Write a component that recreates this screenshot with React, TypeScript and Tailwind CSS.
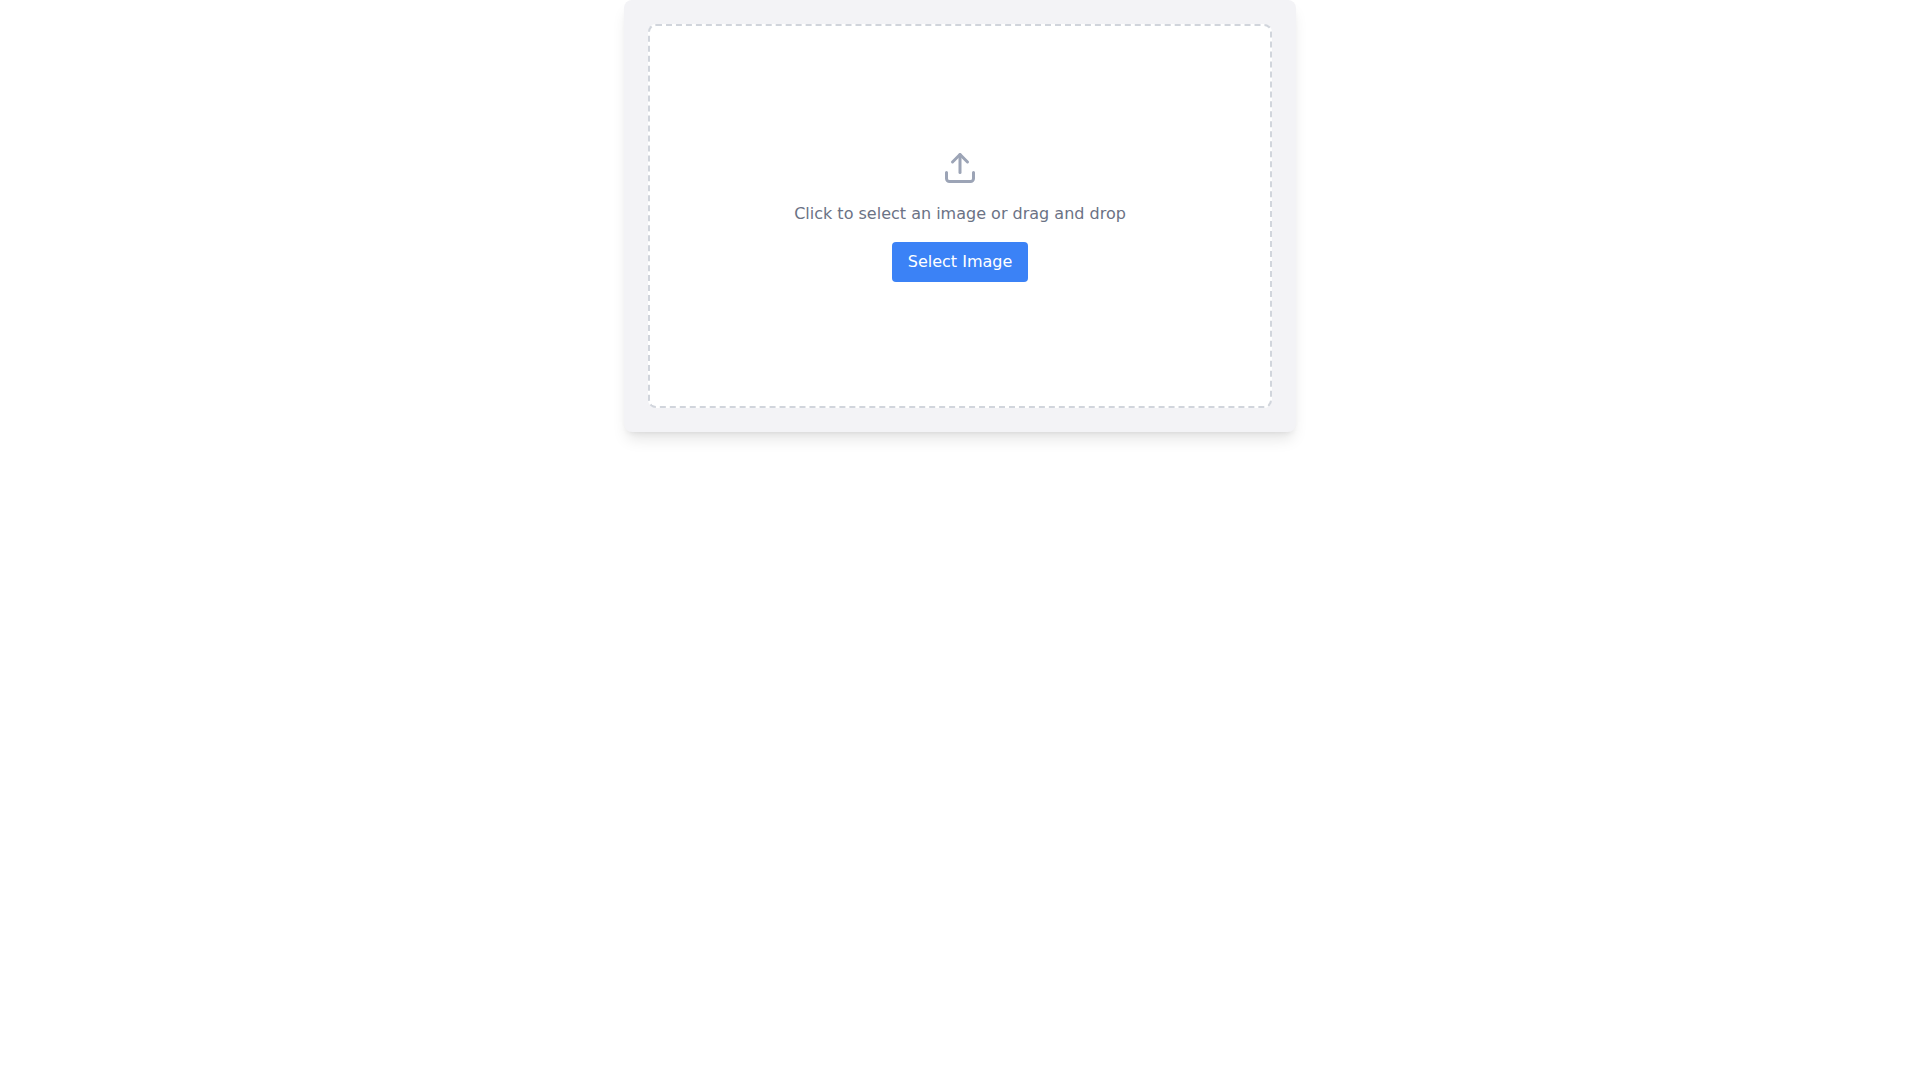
import { useRef, useState } from 'react'
import { Upload } from 'lucide-react'

export default function App() {
  const inputRef = useRef<HTMLInputElement>(null)
  const [preview, setPreview] = useState<string | null>(null)

  const handleFile = (file?: File) => {
    if (!file || !file.type.startsWith('image/')) return
    setPreview(URL.createObjectURL(file))
  }

  return (
    <div className="min-h-screen bg-white font-['DejaVu_Sans',sans-serif]">
      <div className="max-w-2xl mx-auto p-6 bg-[#f3f3f6] rounded-lg shadow-lg">
        <div
          className="flex flex-col items-center justify-center h-96 bg-white border-2 border-dashed border-[#d1d5dc] rounded-lg"
          onDragOver={(e) => e.preventDefault()}
          onDrop={(e) => {
            e.preventDefault()
            handleFile(e.dataTransfer.files[0])
          }}
        >
          {preview ? (
            <img src={preview} alt="Preview" className="max-w-full max-h-full object-contain" />
          ) : (
            <>
              <Upload className="w-9 h-9 mb-4 text-[#9ca4b6]" />
              <p className="mb-4 text-[#6b7285]">Click to select an image or drag and drop</p>
              <button
                type="button"
                onClick={() => inputRef.current?.click()}
                className="px-4 py-2 bg-[#3b82f6] text-white rounded hover:bg-[#2563eb]"
              >
                Select Image
              </button>
            </>
          )}
          <input
            ref={inputRef}
            type="file"
            accept="image/*"
            aria-label="Select Image"
            className="hidden"
            onChange={(e) => handleFile(e.target.files?.[0])}
          />
        </div>
      </div>
    </div>
  )
}
